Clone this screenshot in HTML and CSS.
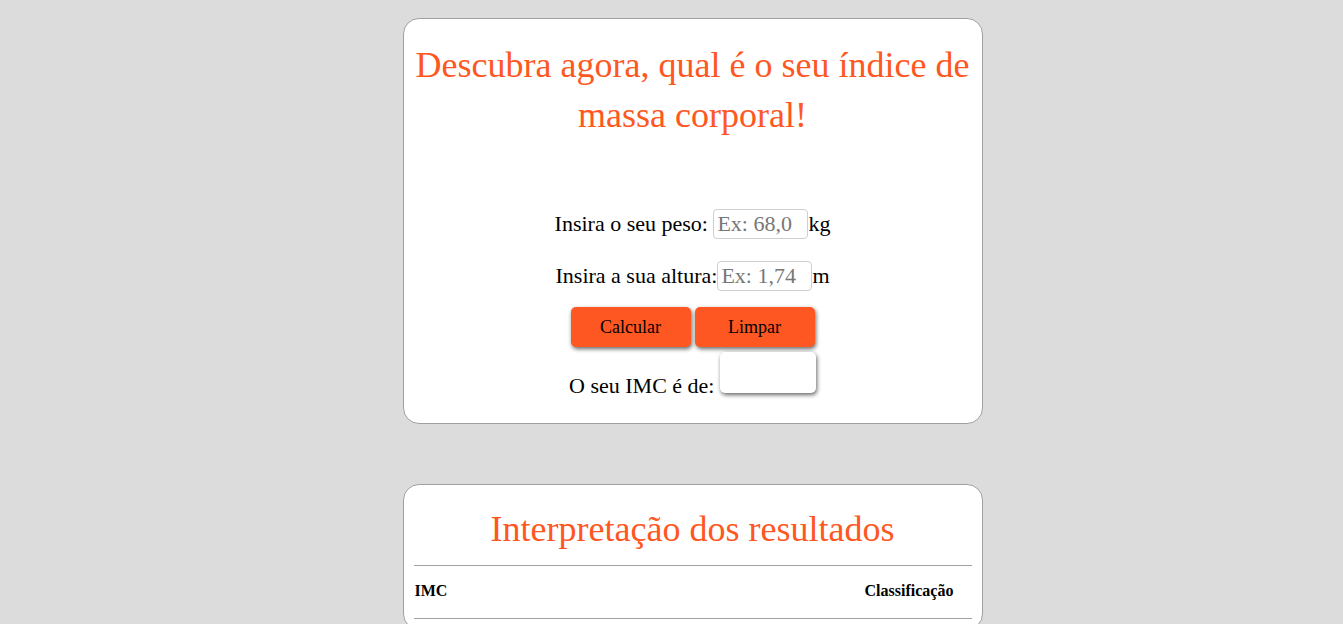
FILE: index.html
```html
<!DOCTYPE html>
<html lang="pt-BR">
<head>
<meta charset="utf-8">
<title>Calculadora de IMC</title>
<link rel="stylesheet" href="styles.css">
</head>
<body>
<main class="page">
  <section class="card calc">
    <h1 class="title">Descubra agora, qual é o seu índice de massa corporal!</h1>
    <form class="form">
      <p class="row">Insira o seu peso: <input class="field" type="text" placeholder="Ex: 68,0">kg</p>
      <p class="row">Insira a sua altura:<input class="field" type="text" placeholder="Ex: 1,74">m</p>
      <div class="buttons"><button type="button" class="btn">Calcular</button> <button type="reset" class="btn">Limpar</button></div>
      <p class="result">O seu IMC é de: <span class="imc-box"></span></p>
    </form>
  </section>
  <section class="card table-card">
    <h2 class="title title-2">Interpretação dos resultados</h2>
    <table class="table">
      <thead>
        <tr><th class="col-imc">IMC</th><th class="col-class">Classificação</th></tr>
      </thead>
    </table>
  </section>
</main>
</body>
</html>
```

FILE: styles.css
```css
html, body {
  margin: 0;
  padding: 0;
}
body {
  background: #dcdcdc;
  font-family: "Liberation Serif", "Times New Roman", serif;
  color: #000;
}
.page {
  padding: 18px 0 0 42px;
  display: flex;
  flex-direction: column;
  align-items: center;
  gap: 60px;
}
.card {
  box-sizing: border-box;
  width: 580px;
  background: #fff;
  border: 1px solid #a0a0a0;
  border-radius: 16px;
  padding: 10px;
  text-align: center;
}
.title {
  color: #ff5722;
  font-weight: normal;
  font-size: 36px;
  line-height: 50px;
  margin: 11px 0 0;
}
.form {
  margin-top: 69px;
}
.row {
  margin: 0 0 22px;
  font-size: 22px;
  line-height: 30px;
}
.field {
  box-sizing: border-box;
  width: 95px;
  height: 30px;
  padding: 0 3px;
  border: 1px solid #cfcfcf;
  border-radius: 4px;
  font-family: "Liberation Serif", "Times New Roman", serif;
  font-size: 22px;
  vertical-align: baseline;
}
.field::placeholder {
  color: #777;
}
.buttons {
  margin-top: -6px;
  font-size: 16px;
}
.btn {
  width: 120px;
  height: 40px;
  background: #ff5722;
  border: none;
  border-radius: 5px;
  box-shadow: 1px 2px 4px rgba(0,0,0,0.6);
  font-family: "Liberation Serif", "Times New Roman", serif;
  font-size: 18px;
  color: #000;
}
.result {
  margin: 5px 0 14px;
  font-size: 22px;
}
.imc-box {
  display: inline-block;
  width: 96px;
  height: 41px;
  background: #fff;
  border-radius: 5px;
  box-shadow: 1px 2px 4px rgba(0,0,0,0.6);
  vertical-align: baseline;
}
.title-2 {
  margin: 9px 0 11px;
}
.table {
  width: 100%;
  border-collapse: collapse;
  font-size: 16px;
}
.table thead tr {
  border-top: 1px solid #a0a0a0;
  border-bottom: 1px solid #a0a0a0;
}
.table th {
  padding: 16px 1px 18px;
  text-align: left;
}
.col-class {
  width: 106px;
}
```
